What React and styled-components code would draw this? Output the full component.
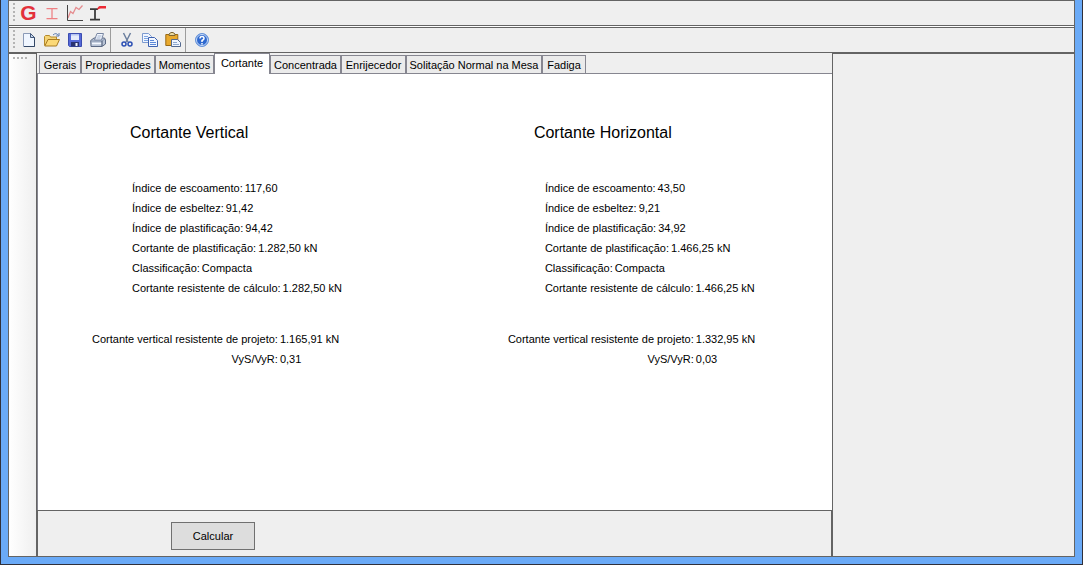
import React, { useState } from "react";
import styled, { createGlobalStyle, css } from "styled-components";

const line = "#646464";
const face = "#efefef";
const tabLine = "#868690";

const GlobalStyle = createGlobalStyle`
  * { box-sizing: border-box; }
  body {
    margin: 0;
    font-family: "Liberation Sans", Arial, sans-serif;
    font-size: 11px;
    line-height: 20px;
    color: #000;
  }
  button { font: inherit; color: inherit; }
`;

const WindowFrame = styled.div`
  display: flex;
  min-height: 100vh;
  padding: 0 7px 7px;
  background: #6aaaf7;
  border: solid #30303a;
  border-width: 0 1px 1px;
`;

const Client = styled.div`
  display: flex;
  flex: 1;
  flex-direction: column;
  min-width: 0;
  background: ${face};
  border: 1px solid ${line};
`;

const Toolbar = styled.div`
  display: flex;
  align-items: center;
  height: ${(p) => (p.$lower ? 26 : 25)}px;
  padding-left: 4px;
  border-bottom: 1px solid ${line};
  ${(p) =>
    p.$lower &&
    css`
      margin-top: 1px;
      border-top: 1px solid ${line};
      box-shadow: 0 -1px #fff;
    `}
`;

const Grip = styled.span`
  flex: none;
  width: ${(p) => (p.$flat ? 16 : 4)}px;
  height: ${(p) => (p.$flat ? 4 : 20)}px;
  background: conic-gradient(from 270deg at 2px 2px, #b4b4b4 90deg, transparent 0) 0 0 / 4px 4px;
`;

const ToolButton = styled.button`
  display: flex;
  align-items: center;
  justify-content: center;
  width: 23px;
  height: 22px;
  padding: 0;
  background: none;
  border: 0;

  svg { display: block; }
`;

const LetterMark = styled.span`
  font-size: 21px;
  font-weight: 700;
  color: #e3313b;
`;

const Separator = styled.span`
  width: 1px;
  height: 24px;
  margin: 0 4px 0 1px;
  background: #9c9c9c;
`;

const Body = styled.div`
  display: flex;
  flex: 1;
  min-height: 0;
`;

const SideStrip = styled.aside`
  flex: none;
  width: 28px;
  padding: 3px 4px;
  background: linear-gradient(90deg, #fff, ${face});
  border-top: 1px solid ${line};
  border-right: 1px solid ${line};
  display: flex;
`;

const Center = styled.main`
  display: flex;
  flex: 1;
  flex-direction: column;
  min-width: 0;
`;

const TabList = styled.div`
  display: flex;
  align-items: flex-end;
  height: 21px;
  padding-left: 2px;
  border-bottom: 1px solid ${tabLine};
`;

const Tab = styled.button`
  width: ${(p) => p.$width}px;
  height: 18px;
  padding: 0;
  line-height: 18px;
  white-space: nowrap;
  background: #ebebeb;
  border: 1px solid ${tabLine};
  border-bottom: 0;

  &[aria-selected="true"] {
    height: 21px;
    margin-bottom: -1px;
    padding-bottom: 2px;
    background: #fff;
  }
`;

const Page = styled.section`
  display: grid;
  flex: 1;
  grid-template-columns: 11fr 10fr;
  align-items: start;
  padding-top: 49px;
  background: #fff;
  border-left: 1px solid ${tabLine};
`;

const Column = styled.article`
  min-width: 0;
`;

const Heading = styled.h2`
  margin: 0 0 35px;
  padding-left: ${(p) => p.$indent}px;
  font-size: 16px;
  font-weight: 400;
  line-height: 20px;
`;

const Results = styled.dl`
  margin: 0 0 31px;
  padding-left: ${(p) => p.$indent}px;
`;

const Result = styled.div`
  display: flex;
  gap: 2px;
  white-space: nowrap;
`;

const Summary = styled.dl`
  display: grid;
  grid-template-columns: max-content max-content;
  column-gap: 2px;
  margin: 0;
  padding-left: 54px;
`;

const Term = styled.dt`
  text-align: right;
`;

const Value = styled.dd`
  margin: 0;
`;

const Actions = styled.footer`
  height: 46px;
  padding: 11px 0 0 133px;
  border: solid ${line};
  border-width: 1px 1px 0;
`;

const ActionButton = styled.button`
  display: block;
  width: 84px;
  height: 28px;
  padding: 0;
  background: #ddd;
  border: 1px solid #707070;
`;

const Inspector = styled.aside`
  flex: none;
  width: 242px;
  border-top: 1px solid ${line};
  border-left: 1px solid ${line};
`;

const Icon = ({ children }) => (
  <svg width="16" height="16" viewBox="0 0 16 16" aria-hidden="true">
    {children}
  </svg>
);

const BeamIcon = () => (
  <Icon>
    <path d="M2.500 3.500h11M2.500 13.500h11M8 4v9" fill="none" stroke="#ee8083" strokeWidth="1.250" />
  </Icon>
);

const ChartIcon = () => (
  <Icon>
    <path d="M1 13 3.500 6.500 6 8.500 9 2.500 12 4.500 15.500.5" fill="none" stroke="#e58b8e" strokeWidth="1.250" />
    <path d="M.5 0v15.500H16" fill="none" stroke="#444" />
  </Icon>
);

const LoadedBeamIcon = () => (
  <Icon>
    <path d="M0 4h8M0 14.500h10M5 4v10" fill="none" stroke="#3a3a3a" strokeWidth="1.750" />
    <path d="M7 4.500Q8 1 10 1h6v2.500h-5q-2 0-3 1z" fill="#ec2a35" />
  </Icon>
);

const NewIcon = () => (
  <Icon>
    <path d="M2.500 1.500h7l4 4v9h-11z" fill="#f0f6ff" stroke="#8b9ab6" />
    <path d="M13.500 5v9.500H3" fill="none" stroke="#334766" />
    <path d="M9.500 1.500v4h4z" fill="#c7d8ec" stroke="#465a7c" />
  </Icon>
);

const OpenIcon = () => (
  <Icon>
    <path d="M.5 13.500v-9l1-1h4l1 1.500h6v3" fill="#f4d374" stroke="#b58a2c" />
    <path d="M.8 14 4 7.500h11.500L12.500 14z" fill="#fbd978" stroke="#a87a20" />
    <path d="M9 3q3-3 5.500.5M15 1v3h-3" fill="none" stroke="#5e7db0" />
  </Icon>
);

const SaveIcon = () => (
  <Icon>
    <path d="M1.500 1.500h13v13h-12l-1-1z" fill="#5568d8" stroke="#3b4cb0" />
    <path d="M4 2h8v6H4z" fill="#e4eafb" />
    <path d="M4 2h8v1.500H4z" fill="#b4c3f0" />
    <path d="M4 10h8v4.500H4z" fill="#2a3270" />
    <path d="M8.500 11h2v3h-2z" fill="#eef2ff" />
  </Icon>
);

const PrintIcon = () => (
  <Icon>
    <path d="M.7 8.500 4 6h10.500l1 2v4L12 14.500H1z" fill="#b9c4d6" stroke="#5c6a84" />
    <path d="M4.500 8 7 1.500h6.500L11.500 8z" fill="#f4f8ff" stroke="#7886a2" />
    <path d="M7.500 4h4M6.500 6h4" stroke="#9fb0cc" />
    <path d="M1 9h11l3-2" fill="none" stroke="#8492ac" />
    <path d="M2 11.500h9.500" stroke="#f4f8ff" strokeWidth="1.500" />
    <path d="M12 9v5" stroke="#45536e" />
  </Icon>
);

const CutIcon = () => (
  <Icon>
    <path d="M4.500 1 9 10M11.500 1 7 10" fill="none" stroke="#6b7f9e" strokeWidth="1.500" />
    <circle cx="5" cy="12" r="2" fill="none" stroke="#2c50b4" strokeWidth="1.500" />
    <circle cx="11" cy="12" r="2" fill="none" stroke="#2c50b4" strokeWidth="1.500" />
  </Icon>
);

const CopyIcon = () => (
  <Icon>
    <path d="M.5 1.500h6l3 3v6h-9z" fill="#f1f6ff" stroke="#7d9bd0" />
    <path d="M2 4.500h4M2 6.500h5M2 8.500h5" stroke="#7fa6e2" />
    <path d="M6.500 5.500h6l3 3v6h-9z" fill="#f1f6ff" stroke="#3e62b0" />
    <path d="M8 8.500h4M8 10.500h6M8 12.500h6" stroke="#5b88d8" />
  </Icon>
);

const PasteIcon = () => (
  <Icon>
    <path d="M.8 2.500h12v11H.8z" fill="#e9a92c" stroke="#9b6a14" />
    <path d="M4 3.500V2l2-1.500h2L10 2v1.500z" fill="#ead9a0" stroke="#7d6532" />
    <path d="M6.500 7.500h6l3 3v4h-9z" fill="#eef4ff" stroke="#53698f" />
    <path d="M8 10.500h4M8 12.500h6" stroke="#8fa8ce" />
  </Icon>
);

const HelpIcon = () => (
  <Icon>
    <circle cx="8" cy="8" r="6.500" fill="#2e68cf" stroke="#6b96da" />
    <circle cx="8" cy="8" r="5.500" fill="none" stroke="#c9ddf9" />
    <path d="M6 6.500Q6 4.500 8 4.500t2 2q0 1-2 2V10M8 11v1.500" fill="none" stroke="#fff" strokeWidth="1.500" />
  </Icon>
);

const Tool = ({ label, children }) => (
  <ToolButton type="button" aria-label={label}>
    {children}
  </ToolButton>
);

const tabs = [
  ["Gerais", 42],
  ["Propriedades", 74],
  ["Momentos", 59],
  ["Cortante", 56],
  ["Concentrada", 71],
  ["Enrijecedor", 65],
  ["Solitação Normal na Mesa", 136],
  ["Fadiga", 44],
];

const shearCases = [
  {
    title: "Cortante Vertical",
    headingIndent: 92,
    listIndent: 94,
    results: [
      ["Índice de escoamento:", "117,60"],
      ["Índice de esbeltez:", "91,42"],
      ["Índice de plastificação:", "94,42"],
      ["Cortante de plastificação:", "1.282,50 kN"],
      ["Classificação:", "Compacta"],
      ["Cortante resistente de cálculo:", "1.282,50 kN"],
    ],
    summary: [
      ["Cortante vertical resistente de projeto:", "1.165,91 kN"],
      ["VyS/VyR:", "0,31"],
    ],
  },
  {
    title: "Cortante Horizontal",
    headingIndent: 80,
    listIndent: 91,
    results: [
      ["Índice de escoamento:", "43,50"],
      ["Índice de esbeltez:", "9,21"],
      ["Índice de plastificação:", "34,92"],
      ["Cortante de plastificação:", "1.466,25 kN"],
      ["Classificação:", "Compacta"],
      ["Cortante resistente de cálculo:", "1.466,25 kN"],
    ],
    summary: [
      ["Cortante vertical resistente de projeto:", "1.332,95 kN"],
      ["VyS/VyR:", "0,03"],
    ],
  },
];

export default function App() {
  const [active, setActive] = useState("Cortante");

  return (
    <>
      <GlobalStyle />
      <WindowFrame>
        <Client>
          <Toolbar role="toolbar" aria-label="Perfil">
            <Grip />
            <Tool label="Gerais"><LetterMark>G</LetterMark></Tool>
            <Tool label="Perfil"><BeamIcon /></Tool>
            <Tool label="Gráfico"><ChartIcon /></Tool>
            <Tool label="Carga"><LoadedBeamIcon /></Tool>
          </Toolbar>
          <Toolbar $lower role="toolbar" aria-label="Arquivo">
            <Grip />
            <Tool label="Novo"><NewIcon /></Tool>
            <Tool label="Abrir"><OpenIcon /></Tool>
            <Tool label="Salvar"><SaveIcon /></Tool>
            <Tool label="Imprimir"><PrintIcon /></Tool>
            <Separator />
            <Tool label="Recortar"><CutIcon /></Tool>
            <Tool label="Copiar"><CopyIcon /></Tool>
            <Tool label="Colar"><PasteIcon /></Tool>
            <Separator />
            <Tool label="Ajuda"><HelpIcon /></Tool>
          </Toolbar>
          <Body>
            <SideStrip><Grip $flat /></SideStrip>
            <Center>
              <TabList role="tablist">
                {tabs.map(([name, width]) => (
                  <Tab
                    key={name}
                    type="button"
                    role="tab"
                    $width={width}
                    aria-selected={name === active}
                    onClick={() => setActive(name)}
                  >
                    {name}
                  </Tab>
                ))}
              </TabList>
              <Page role="tabpanel">
                {shearCases.map((item) => (
                  <Column key={item.title}>
                    <Heading $indent={item.headingIndent}>{item.title}</Heading>
                    <Results $indent={item.listIndent}>
                      {item.results.map(([term, value]) => (
                        <Result key={term}>
                          <dt>{term}</dt>
                          <Value>{value}</Value>
                        </Result>
                      ))}
                    </Results>
                    <Summary>
                      {item.summary.map(([term, value]) => (
                        <React.Fragment key={term}>
                          <Term>{term}</Term>
                          <Value>{value}</Value>
                        </React.Fragment>
                      ))}
                    </Summary>
                  </Column>
                ))}
              </Page>
              <Actions>
                <ActionButton type="button">Calcular</ActionButton>
              </Actions>
            </Center>
            <Inspector />
          </Body>
        </Client>
      </WindowFrame>
    </>
  );
}
